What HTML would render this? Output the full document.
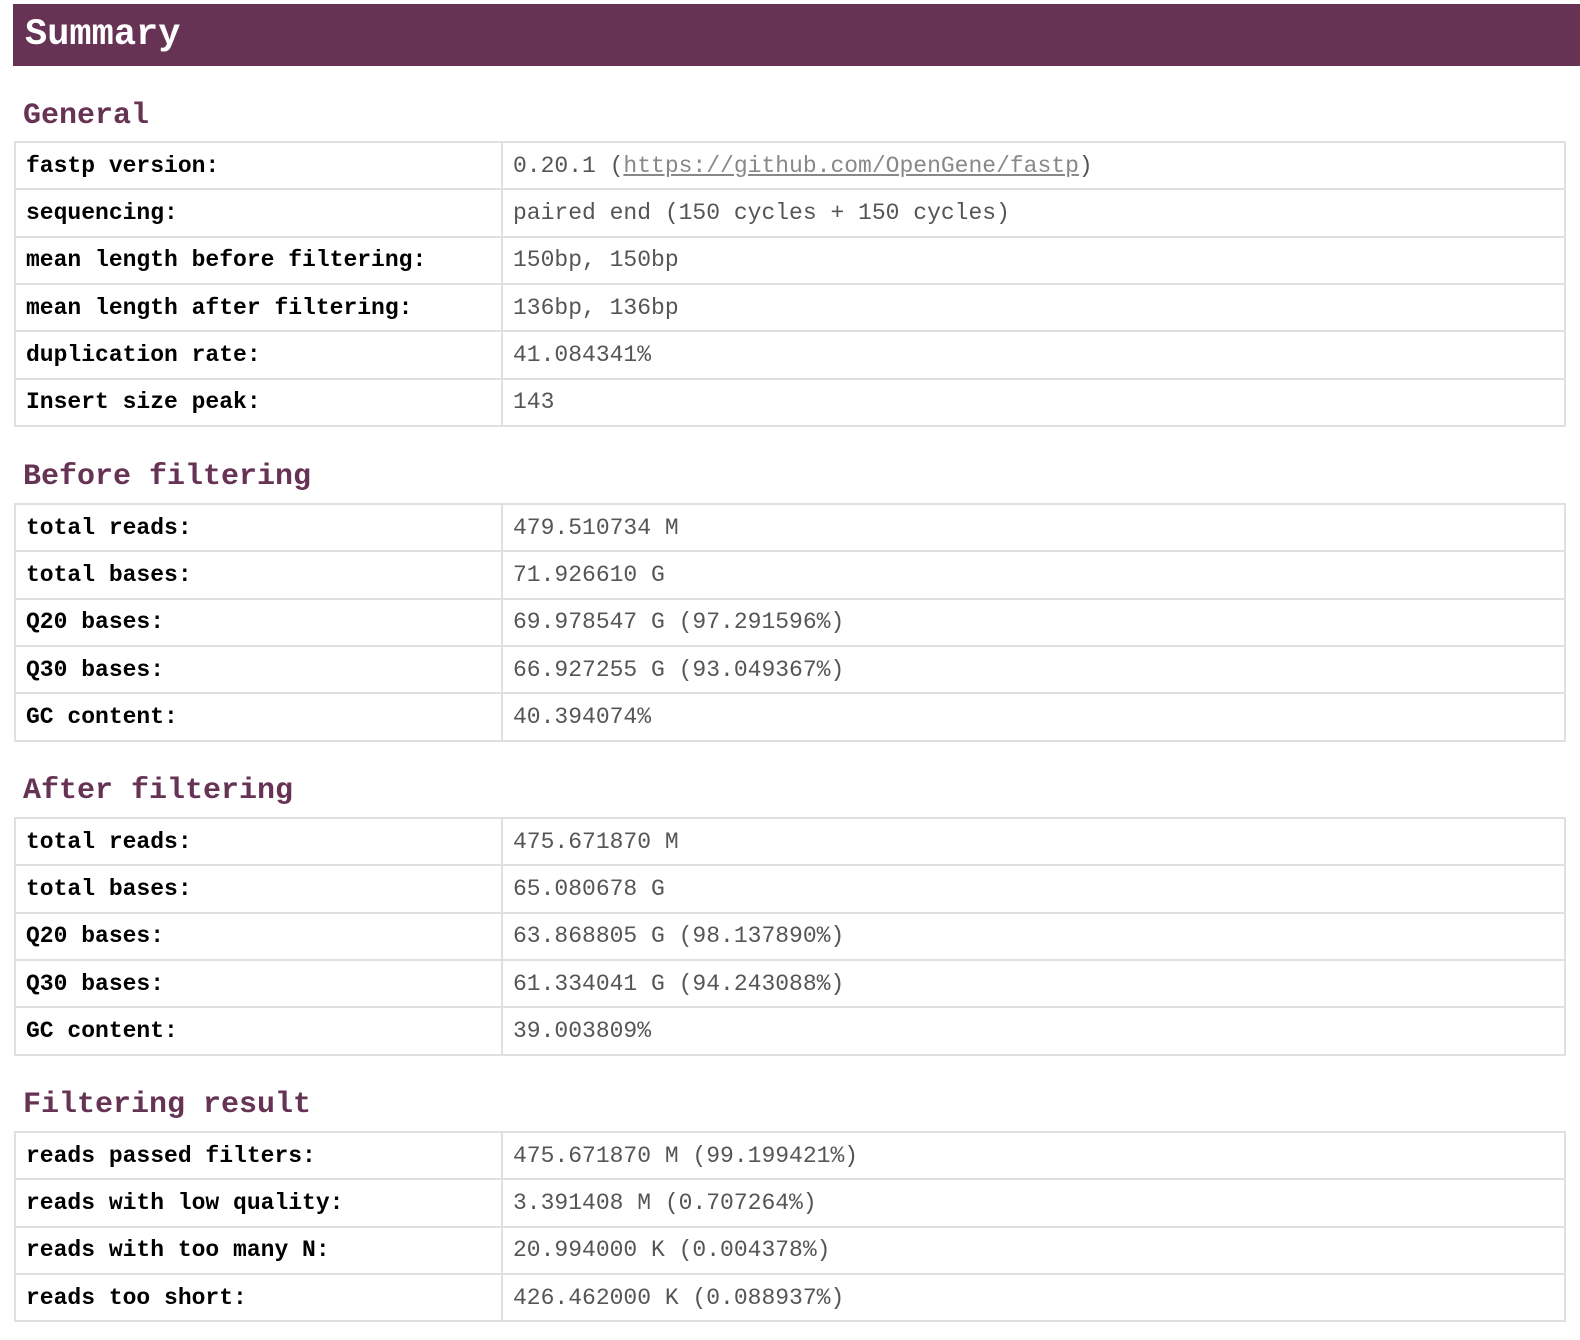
<!DOCTYPE html>
<html><head><meta charset="utf-8"><style>
body{margin:0;background:#fff;font-family:"Liberation Mono",monospace;}
.hdr{position:absolute;left:13px;top:4px;width:1567px;height:62px;background:#663355;color:#fff;font-weight:bold;font-size:37px;line-height:62px;box-sizing:border-box;padding-left:12px;}
h2{position:absolute;left:23px;margin:0;font-size:30px;font-weight:bold;color:#663355;line-height:36px;}
table{position:absolute;left:14px;width:1552px;border-collapse:collapse;table-layout:fixed;}
td{border:2px solid #e0e0e0;height:45.33px;padding:0 0 0 10px;font-size:23px;white-space:nowrap;}
td.k{width:475px;font-weight:bold;color:#000;}
td.v{color:#555;}
a{color:#888;text-decoration:underline;}
</style></head><body>
<div class="hdr">Summary</div>
<h2 style="top:98px">General</h2>
<table style="top:141px">
<tr><td class="k">fastp version:</td><td class="v">0.20.1 (<a>https://github.com/OpenGene/fastp</a>)</td></tr>
<tr><td class="k">sequencing:</td><td class="v">paired end (150 cycles + 150 cycles)</td></tr>
<tr><td class="k">mean length before filtering:</td><td class="v">150bp, 150bp</td></tr>
<tr><td class="k">mean length after filtering:</td><td class="v">136bp, 136bp</td></tr>
<tr><td class="k">duplication rate:</td><td class="v">41.084341%</td></tr>
<tr><td class="k">Insert size peak:</td><td class="v">143</td></tr>
</table>
<h2 style="top:459px">Before filtering</h2>
<table style="top:503px">
<tr><td class="k">total reads:</td><td class="v">479.510734 M</td></tr>
<tr><td class="k">total bases:</td><td class="v">71.926610 G</td></tr>
<tr><td class="k">Q20 bases:</td><td class="v">69.978547 G (97.291596%)</td></tr>
<tr><td class="k">Q30 bases:</td><td class="v">66.927255 G (93.049367%)</td></tr>
<tr><td class="k">GC content:</td><td class="v">40.394074%</td></tr>
</table>
<h2 style="top:773px">After filtering</h2>
<table style="top:817px">
<tr><td class="k">total reads:</td><td class="v">475.671870 M</td></tr>
<tr><td class="k">total bases:</td><td class="v">65.080678 G</td></tr>
<tr><td class="k">Q20 bases:</td><td class="v">63.868805 G (98.137890%)</td></tr>
<tr><td class="k">Q30 bases:</td><td class="v">61.334041 G (94.243088%)</td></tr>
<tr><td class="k">GC content:</td><td class="v">39.003809%</td></tr>
</table>
<h2 style="top:1087px">Filtering result</h2>
<table style="top:1131px">
<tr><td class="k">reads passed filters:</td><td class="v">475.671870 M (99.199421%)</td></tr>
<tr><td class="k">reads with low quality:</td><td class="v">3.391408 M (0.707264%)</td></tr>
<tr><td class="k">reads with too many N:</td><td class="v">20.994000 K (0.004378%)</td></tr>
<tr><td class="k">reads too short:</td><td class="v">426.462000 K (0.088937%)</td></tr>
</table>
</body></html>
